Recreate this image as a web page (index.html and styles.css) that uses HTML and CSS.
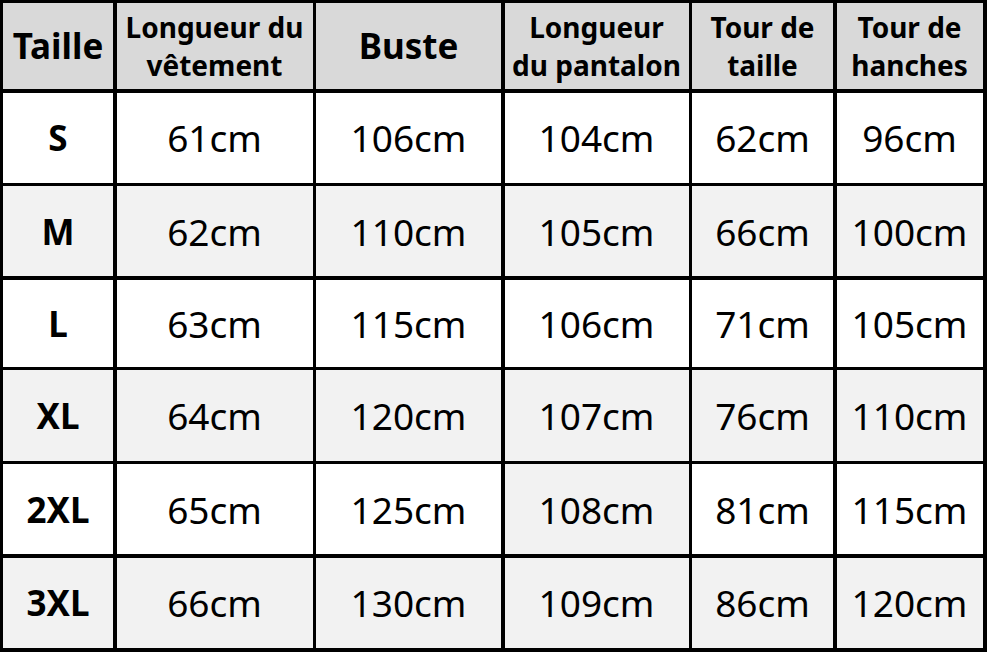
FILE: index.html
```html
<!DOCTYPE html>
<html lang="fr">
<head>
<meta charset="utf-8">
<title>Tableau des tailles</title>
<link rel="stylesheet" href="styles.css">
</head>
<body>
<div class="table">
  <div class="cell head big">Taille</div>
  <div class="cell head">Longueur du<br>vêtement</div>
  <div class="cell head big">Buste</div>
  <div class="cell head">Longueur<br>du pantalon</div>
  <div class="cell head">Tour de<br>taille</div>
  <div class="cell head">Tour de<br>hanches</div>

  <div class="cell label">S</div>
  <div class="cell">61cm</div>
  <div class="cell">106cm</div>
  <div class="cell">104cm</div>
  <div class="cell">62cm</div>
  <div class="cell">96cm</div>

  <div class="cell label alt">M</div>
  <div class="cell alt">62cm</div>
  <div class="cell alt">110cm</div>
  <div class="cell alt">105cm</div>
  <div class="cell alt">66cm</div>
  <div class="cell alt">100cm</div>

  <div class="cell label">L</div>
  <div class="cell">63cm</div>
  <div class="cell">115cm</div>
  <div class="cell">106cm</div>
  <div class="cell">71cm</div>
  <div class="cell">105cm</div>

  <div class="cell label alt">XL</div>
  <div class="cell alt">64cm</div>
  <div class="cell alt">120cm</div>
  <div class="cell alt">107cm</div>
  <div class="cell alt">76cm</div>
  <div class="cell alt">110cm</div>

  <div class="cell label">2XL</div>
  <div class="cell">65cm</div>
  <div class="cell">125cm</div>
  <div class="cell alt">108cm</div>
  <div class="cell">81cm</div>
  <div class="cell">115cm</div>

  <div class="cell label alt">3XL</div>
  <div class="cell alt">66cm</div>
  <div class="cell alt">130cm</div>
  <div class="cell alt">109cm</div>
  <div class="cell alt">86cm</div>
  <div class="cell alt">120cm</div>
</div>
</body>
</html>
```
FILE: styles.css
```css
html, body {
  margin: 0;
  padding: 0;
  background: #ffffff;
}

.table {
  display: grid;
  width: max-content;
  grid-template-columns: 110px 196px 185px 184px 141px 146px;
  grid-template-rows: 86px 90px 90px 87px 90.5px 90px 90px;
  gap: 3.5px;
  padding: 3px 4px 4px 3px;
  background: #000000;
  font-family: "Noto Sans", "Open Sans", sans-serif;
  color: #000000;
}

.cell {
  display: flex;
  align-items: center;
  justify-content: center;
  text-align: center;
  background: #ffffff;
  font-size: 37px;
  line-height: 1;
}

.cell.alt {
  background: #f2f2f2;
}

.head {
  background: #d9d9d9;
  font-weight: 700;
  font-size: 28px;
  line-height: 38px;
}

.head.big {
  font-size: 35px;
}

.label {
  font-weight: 700;
  font-size: 35px;
}
```
